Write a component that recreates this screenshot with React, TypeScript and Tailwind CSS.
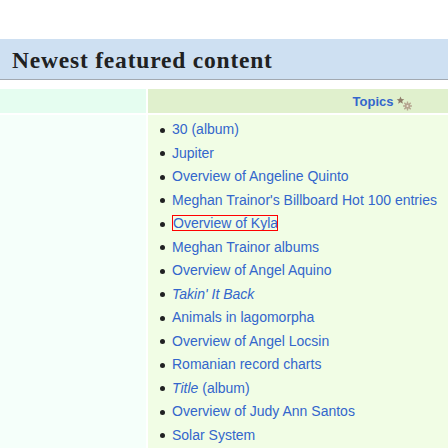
import React from 'react';

type Item = { text: string; italic?: string; boxed?: boolean };

const items: Item[] = [
  { text: '30 (album)' },
  { text: 'Jupiter' },
  { text: 'Overview of Angeline Quinto' },
  { text: "Meghan Trainor's Billboard Hot 100 entries" },
  { text: 'Overview of Kyla', boxed: true },
  { text: 'Meghan Trainor albums' },
  { text: 'Overview of Angel Aquino' },
  { text: '', italic: "Takin' It Back" },
  { text: 'Animals in lagomorpha' },
  { text: 'Overview of Angel Locsin' },
  { text: 'Romanian record charts' },
  { text: ' (album)', italic: 'Title' },
  { text: 'Overview of Judy Ann Santos' },
  { text: 'Solar System' },
];

function TopicsIcon() {
  return (
    <svg width="17" height="15" viewBox="0 0 17 15" className="ml-[3px] mt-[5px]">
      {/* star */}
      <path
        d="M4.5 0.5 L5.6 3.1 L8.3 3.3 L6.2 5 L6.9 7.7 L4.5 6.2 L2.1 7.7 L2.8 5 L0.7 3.3 L3.4 3.1 Z"
        fill="#8f7d69"
      />
      {/* cog */}
      <g fill="#b5a690">
        <circle cx="11.5" cy="10" r="2.8" />
        <rect x="10.8" y="5.5" width="1.4" height="9" />
        <rect x="7" y="9.3" width="9" height="1.4" />
        <rect x="10.8" y="5.5" width="1.4" height="9" transform="rotate(45 11.5 10)" />
        <rect x="10.8" y="5.5" width="1.4" height="9" transform="rotate(-45 11.5 10)" />
      </g>
      <circle cx="11.5" cy="10" r="1" fill="#efe6d6" />
    </svg>
  );
}

export default function App() {
  return (
    <div className="w-full h-[448px] overflow-hidden bg-white font-[Liberation_Sans,Arial,sans-serif] text-[#202122]">
      {/* Heading */}
      <h2 className="mt-[39px] h-[41px] bg-[#cee0f2] border-b border-[#a2a9b1] pl-[12px] pt-[7px] font-[Liberation_Serif,Georgia,serif] font-bold text-[23.5px] leading-[28px] tracking-[0.8px] whitespace-nowrap">
        Newest featured content
      </h2>

      {/* Portal table */}
      <div className="mt-[9px] grid grid-cols-[146px_470px] grid-rows-[24px_1fr] gap-[2px] h-[360px]">
        <div className="bg-[#e5fdf0]" />
        <div className="bg-[#e0f0cd] flex items-center justify-center">
          <span className="text-[13px] font-bold text-[#3366cc] leading-none">Topics</span>
          <TopicsIcon />
        </div>
        <div className="bg-[#f5fffa]" />
        <div className="bg-[#f1fde5] pt-[3px] pl-[12px]">
          <ul className="text-[14px] leading-[22.4px] whitespace-nowrap text-[#3366cc]">
            {items.map((it, i) => (
              <li key={i} className="mb-[1.1px]">
                <span className="inline-block w-[5px] h-[5px] rounded-full bg-[#202122] mr-[7px] align-middle" />
                {it.boxed ? (
                  <span className="inline-block w-[106px] h-[16px] leading-[14px] overflow-hidden border border-[#ff0000] align-[-3px]">
                    {it.text}
                  </span>
                ) : (
                  <span>
                    {it.italic && <i>{it.italic}</i>}
                    {it.text}
                  </span>
                )}
              </li>
            ))}
          </ul>
        </div>
      </div>
    </div>
  );
}
